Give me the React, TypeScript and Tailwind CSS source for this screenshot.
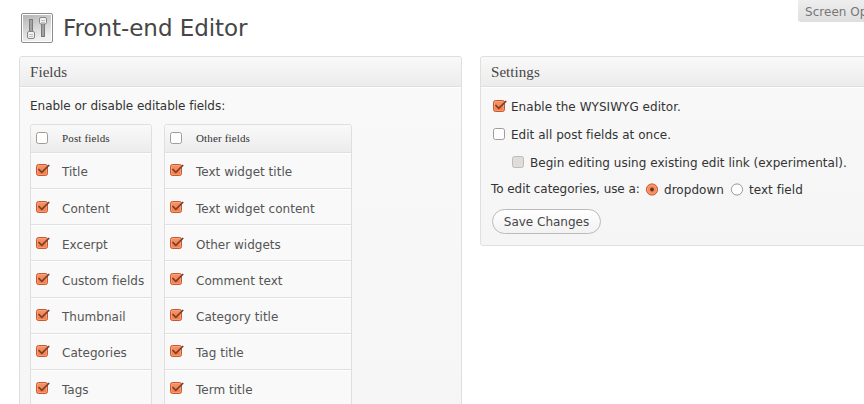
import type { ReactNode } from 'react';

function Check({ checked = false, disabled = false }: { checked?: boolean; disabled?: boolean }) {
  return (
    <svg width="15" height="14" viewBox="0 0 15 14" className="block shrink-0">
      <defs>
        <linearGradient id="orange" x1="0" y1="0" x2="0" y2="1">
          <stop offset="0" stopColor="#f79368" />
          <stop offset="1" stopColor="#f27c48" />
        </linearGradient>
      </defs>
      <rect
        x="0.5"
        y="1.5"
        width="11"
        height="11"
        rx="2"
        fill={checked ? 'url(#orange)' : disabled ? '#dedddb' : '#fff'}
        stroke={checked ? '#c9582f' : disabled ? '#bfbcb8' : '#a09b96'}
      />
      {checked && <rect x="1.5" y="2.5" width="9" height="9" rx="1" fill="none" stroke="#ffa888" strokeOpacity="0.65" />}
      {checked && <path d="M2.4 6 L5.8 9.4 L13.2 2" fill="none" stroke="#74402c" strokeWidth="1.7" />}
    </svg>
  );
}

function Radio({ checked = false }: { checked?: boolean }) {
  return (
    <svg width="14" height="14" viewBox="0 0 14 14" className="block shrink-0">
      <circle cx="7" cy="6.5" r="5.6" fill={checked ? '#f58a5d' : '#fff'} stroke={checked ? '#c4532a' : '#9d9994'} />
      {checked && <circle cx="7" cy="6.5" r="4.5" fill="none" stroke="#ffa888" strokeOpacity="0.6" />}
      {checked && <circle cx="7" cy="6.5" r="1.9" fill="#663322" />}
    </svg>
  );
}

function SettingsIcon() {
  return (
    <svg width="34" height="32" viewBox="0 0 34 32" className="block shrink-0">
      <defs>
        <linearGradient id="plate" x1="0" y1="0" x2="0.35" y2="1">
          <stop offset="0" stopColor="#b4b4b4" />
          <stop offset="0.55" stopColor="#d6d6d6" />
          <stop offset="1" stopColor="#f0f0f0" />
        </linearGradient>
      </defs>
      <rect x="1.5" y="1.5" width="31" height="29" rx="1.5" fill="#fff" stroke="#8c8c8c" />
      <rect x="3" y="3" width="28" height="26" fill="url(#plate)" />
      <rect x="9.5" y="7.5" width="3" height="14" fill="#a2a2a2" stroke="#7a7a7a" />
      <rect x="21.5" y="9.5" width="3" height="15" fill="#a2a2a2" stroke="#7a7a7a" />
      <rect x="7.5" y="19.5" width="7" height="7" rx="1.5" fill="#f3f3f3" stroke="#868686" />
      <path d="M9 22.5h4M9 24.5h4" stroke="#bdbdbd" />
      <rect x="19.5" y="5.5" width="7" height="6.5" rx="1.5" fill="#f3f3f3" stroke="#868686" />
      <path d="M21 8.5h4M21 10.5h4" stroke="#bdbdbd" />
    </svg>
  );
}

function Panel({ title, className, children }: { title: string; className: string; children: ReactNode }) {
  return (
    <section
      className={`shrink-0 rounded-[3px] border border-[#dfdfdf] bg-linear-to-b from-[#f9f9f9] to-[#f5f5f5] ${className}`}
    >
      <h3 className="h-[30px] rounded-t-[3px] border-b border-[#dfdfdf] bg-linear-to-b from-[#f9f9f9] to-[#ececec] pl-2.5 font-['Liberation_Serif',serif] text-[15px] leading-[31px] tracking-[0.06px] text-[#464646] shadow-[0_1px_0_#fff]">
        {title}
      </h3>
      {children}
    </section>
  );
}

function FieldTable({ title, items, className }: { title: string; items: string[]; className: string }) {
  return (
    <div className={`rounded-t-[3px] border border-[#dfdfdf] bg-[#f9f9f9] ${className}`}>
      <div className="flex h-[26.8px] items-center rounded-t-[3px] bg-linear-to-b from-[#f9f9f9] to-[#ececec] pl-[5px]">
        <Check />
        <span className="pl-[11px] font-['Liberation_Serif',serif] text-[11px] tracking-[0.15px] text-[#333]">{title}</span>
      </div>
      {items.map((item) => (
        <div key={item} className="flex h-[36.2px] items-start border-t border-[#dfdfdf] pt-[10.6px] pl-[5px] text-[#555] shadow-[inset_0_1px_0_#fff]">
          <Check checked />
          <span className="pl-[11px] leading-[18px] tracking-[0.02px]">{item}</span>
        </div>
      ))}
    </div>
  );
}

const postFields = ['Title', 'Content', 'Excerpt', 'Custom fields', 'Thumbnail', 'Categories', 'Tags'];
const otherFields = [
  'Text widget title',
  'Text widget content',
  'Other widgets',
  'Comment text',
  'Category title',
  'Tag title',
  'Term title',
];

export default function App() {
  return (
    <div className="h-[404px] w-[864px] overflow-hidden bg-white font-['DejaVu_Sans',sans-serif] text-[12px] whitespace-nowrap text-[#333]">
      <header className="flex h-14 items-start justify-between pl-5">
        <div className="flex items-start pt-3">
          <SettingsIcon />
          <h1 className="pl-[9px] text-[23px] leading-[32px] tracking-[-0.04px] text-[#464646]">Front-end Editor</h1>
        </div>
        <div className="h-[22px] w-[66px] rounded-bl-[3px] bg-linear-to-b from-[#eeeeee] to-[#dfdfdf] pl-[7px] leading-[24px] tracking-[0.04px] text-[#777]">
          Screen Options
        </div>
      </header>
      <main className="flex items-start gap-[18px] pl-[19px]">
        <Panel title="Fields" className="h-[420px] w-[443px]">
          <div className="px-2.5 pt-[9px]">
            <p className="leading-[20px] tracking-[-0.03px]">Enable or disable editable fields:</p>
            <div className="flex gap-3 pt-2">
              <FieldTable title="Post fields" items={postFields} className="w-[122px]" />
              <FieldTable title="Other fields" items={otherFields} className="w-[188px]" />
            </div>
          </div>
        </Panel>
        <Panel title="Settings" className="h-[190px] w-[443px]">
          <div className="flex flex-col items-start pl-[10px] pt-[10px]">
            <label className="flex h-7 items-start gap-[3px] pl-0.5">
              <span className="pt-[2px]"><Check checked /></span>
              <span className="leading-[20px] tracking-[0.04px]">Enable the WYSIWYG editor.</span>
            </label>
            <label className="flex h-7 items-start gap-[3px] pl-0.5">
              <span className="pt-[2px]"><Check /></span>
              <span className="leading-[20px] tracking-[0.03px]">Edit all post fields at once.</span>
            </label>
            <label className="flex h-[26px] items-start gap-[3px] pl-[21px]">
              <span className="pt-[2px]"><Check disabled /></span>
              <span className="leading-[20px] tracking-[0.03px]">Begin editing using existing edit link (experimental).</span>
            </label>
            <div className="flex h-[30px] items-start">
              <span className="w-[154px] leading-[20px] tracking-[-0.06px]">To edit categories, use a:</span>
              <span className="pt-1"><Radio checked /></span>
              <span className="w-[71px] pl-[5px] leading-[22px] tracking-[0.04px]">dropdown</span>
              <span className="pt-1"><Radio /></span>
              <span className="pl-[5px] leading-[22px] tracking-[0.04px]">text field</span>
            </div>
            <button className="ml-px h-[25px] w-[109px] rounded-full border border-[#bbb] bg-linear-to-b from-white to-[#f2f2f2] text-[#464646]">
              Save Changes
            </button>
          </div>
        </Panel>
      </main>
    </div>
  );
}
